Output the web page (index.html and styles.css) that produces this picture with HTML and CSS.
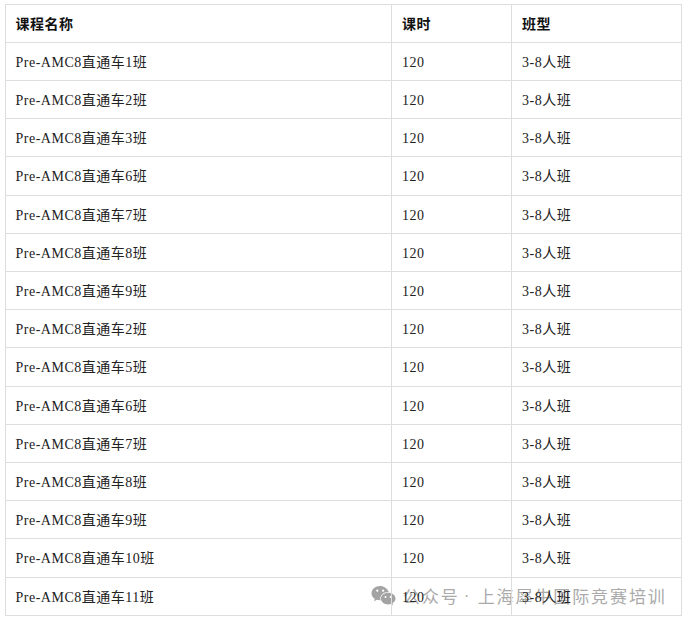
FILE: index.html
```html
<!DOCTYPE html>
<html lang="zh">
<head>
<meta charset="utf-8">
<title>课程表</title>
<link rel="stylesheet" href="styles.css">
</head>
<body>
<table class="course-table">
<colgroup><col class="col-name"><col class="col-hours"><col class="col-type"></colgroup>
<thead>
<tr><th>课程名称</th><th>课时</th><th>班型</th></tr>
</thead>
<tbody>
<tr><td>Pre-AMC8直通车1班</td><td>120</td><td>3-8人班</td></tr>
<tr><td>Pre-AMC8直通车2班</td><td>120</td><td>3-8人班</td></tr>
<tr><td>Pre-AMC8直通车3班</td><td>120</td><td>3-8人班</td></tr>
<tr><td>Pre-AMC8直通车6班</td><td>120</td><td>3-8人班</td></tr>
<tr><td>Pre-AMC8直通车7班</td><td>120</td><td>3-8人班</td></tr>
<tr><td>Pre-AMC8直通车8班</td><td>120</td><td>3-8人班</td></tr>
<tr><td>Pre-AMC8直通车9班</td><td>120</td><td>3-8人班</td></tr>
<tr><td>Pre-AMC8直通车2班</td><td>120</td><td>3-8人班</td></tr>
<tr><td>Pre-AMC8直通车5班</td><td>120</td><td>3-8人班</td></tr>
<tr><td>Pre-AMC8直通车6班</td><td>120</td><td>3-8人班</td></tr>
<tr><td>Pre-AMC8直通车7班</td><td>120</td><td>3-8人班</td></tr>
<tr><td>Pre-AMC8直通车8班</td><td>120</td><td>3-8人班</td></tr>
<tr><td>Pre-AMC8直通车9班</td><td>120</td><td>3-8人班</td></tr>
<tr><td>Pre-AMC8直通车10班</td><td>120</td><td>3-8人班</td></tr>
<tr><td>Pre-AMC8直通车11班</td><td>120</td><td>3-8人班</td></tr>
</tbody>
</table>
<div class="watermark">
<svg class="wm-icon" viewBox="0 0 24 20" width="25" height="20" aria-hidden="true">
<path fill-rule="evenodd" d="M8.700 0C3.900 0 0 3.200 0 7.200c0 2.300 1.300 4.300 3.300 5.600l-.8 2.500 2.900-1.500c1 .3 2 .5 3 .5h.7a6 6 0 0 1-.3-1.800c0-3.700 3.500-6.600 7.800-6.600h.7C15.700 2.600 12.400 0 8.700 0zM5.800 3.500a1.150 1.150 0 1 1 0 2.300 1.150 1.150 0 0 1 0-2.300zm5.800 0a1.150 1.150 0 1 1 0 2.300 1.150 1.150 0 0 1 0-2.300z"/>
<path fill-rule="evenodd" d="M24 12.600c0-3.300-3.200-5.900-7.300-5.900s-7.300 2.600-7.300 5.900 3.200 5.900 7.300 5.900c.8 0 1.700-.1 2.400-.4l2.500 1.400-.7-2.200c2-1.100 3.100-2.800 3.100-4.700zM14 10.100a1 1 0 1 1 0 2 1 1 0 0 1 0-2zm5.200 0a1 1 0 1 1 0 2 1 1 0 0 1 0-2z"/>
</svg>
<span class="wm-text">公众号</span><span class="wm-dot">·</span><span class="wm-text">上海犀牛国际竞赛培训</span>
</div>
</body>
</html>
```
FILE: styles.css
```css
html { margin: 0; padding: 0; background: #fff; }
body { margin: 0; padding: 3.720px 5px 0; position: relative; height: 619px; overflow: hidden; }
.course-table {
  border-collapse: collapse;
  table-layout: fixed;
  width: 676px;
  font-family: "Liberation Serif", "Noto Sans CJK SC", serif;
  font-size: 14px;
  letter-spacing: .5px;
  color: #222;
}
.col-name { width: 386px; }
.col-hours { width: 120px; }
.col-type { width: 170px; }
th, td {
  border: 1px solid #ddd;
  padding: 2.800px 10px 0;
  height: 34.400px;
  line-height: 22px;
  text-align: left;
  font-weight: 400;
  box-sizing: content-box;
}
th:first-child, td:first-child { padding-left: 9.500px; }
th { font-weight: 700; color: #111; }
.watermark {
  position: absolute;
  z-index: -1;
  left: 371px;
  top: 584px;
  display: flex;
  align-items: center;
  color: #aaa;
  font-family: "Noto Sans CJK SC", sans-serif;
  font-size: 17px;
  line-height: 24px;
  white-space: nowrap;
}
.wm-text { letter-spacing: 1.900px; }
.wm-dot { font-family: "Liberation Sans", sans-serif; width: 6px; margin: 0 8px 0 4px; text-align: center; }
.wm-icon { fill: #a3a3a3; flex: none; margin-right: 7px; }
```
